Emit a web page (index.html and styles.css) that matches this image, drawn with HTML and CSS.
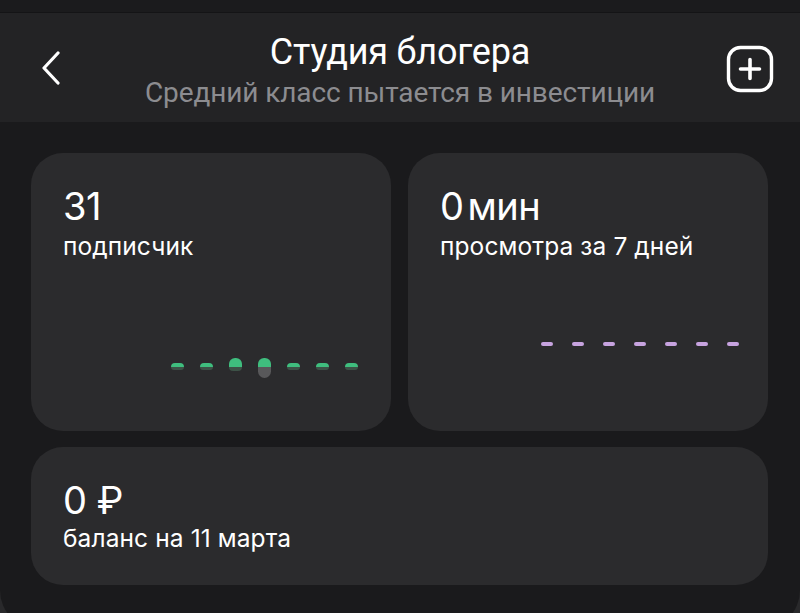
FILE: index.html
```html
<!DOCTYPE html>
<html lang="ru">
<head>
<meta charset="utf-8">
<title>Студия блогера</title>
<link rel="stylesheet" href="styles.css">
</head>
<body>
<div class="screen">
  <div class="top-strip"></div>
  <header class="header">
    <button class="icon-btn back" aria-label="Назад">
      <svg width="22" height="34" viewBox="0 0 22 34"><path d="M18 2 L4 17 L18 32" fill="none" stroke="#fff" stroke-width="3.2" stroke-linecap="round" stroke-linejoin="round"/></svg>
    </button>
    <div class="titles">
      <h1 class="title">Студия блогера</h1>
      <p class="subtitle">Средний класс пытается в инвестиции</p>
    </div>
    <button class="icon-btn add" aria-label="Добавить">
      <svg width="48" height="48" viewBox="0 0 48 48"><rect x="2.5" y="2.5" width="43" height="43" rx="12" fill="none" stroke="#fff" stroke-width="3.4"/><path d="M24 14.5 V33.5 M14.5 24 H33.5" stroke="#fff" stroke-width="3.6" stroke-linecap="round"/></svg>
    </button>
  </header>
  <main class="grid">
    <section class="card">
      <div class="value">31</div>
      <div class="label">подписчик</div>
      <div class="bars">
        <span class="bar"><span class="up"><i class="g" style="height:4px"></i></span><i class="d" style="height:3px"></i></span>
        <span class="bar"><span class="up"><i class="g" style="height:4px"></i></span><i class="d" style="height:3px"></i></span>
        <span class="bar"><span class="up"><i class="g" style="height:9px"></i></span><i class="d" style="height:4px"></i></span>
        <span class="bar"><span class="up"><i class="g" style="height:9px"></i></span><i class="d neg" style="height:11px"></i></span>
        <span class="bar"><span class="up"><i class="g" style="height:4px"></i></span><i class="d" style="height:3px"></i></span>
        <span class="bar"><span class="up"><i class="g" style="height:4px"></i></span><i class="d" style="height:3px"></i></span>
        <span class="bar"><span class="up"><i class="g" style="height:4px"></i></span><i class="d" style="height:3px"></i></span>
      </div>
    </section>
    <section class="card">
      <div class="value">0<span class="unit">мин</span></div>
      <div class="label">просмотра за 7 дней</div>
      <div class="dashes">
        <i></i><i></i><i></i><i></i><i></i><i></i><i></i>
      </div>
    </section>
    <section class="card wide">
      <div class="value">0 ₽</div>
      <div class="label">баланс на 11 марта</div>
    </section>
  </main>
</div>
</body>
</html>
```
FILE: styles.css
```css
html, body {
  margin: 0;
  padding: 0;
  height: 100%;
  overflow: hidden;
  background: #29292b;
}
.screen {
  background: #1a1a1c;
  border-radius: 0 0 40px 40px;
  padding-bottom: 45px;
}
.top-strip {
  height: 12px;
  background: #1b1b1d;
  border-bottom: 1px solid #141416;
}
.header {
  height: 109px;
  background: #232325;
  display: grid;
  grid-template-columns: 100px 1fr 100px;
  align-items: center;
}
.icon-btn {
  background: none;
  border: 0;
  padding: 0;
  display: flex;
  cursor: pointer;
}
.back {
  justify-self: start;
  margin-left: 40px;
  margin-top: 0;
}
.add {
  justify-self: end;
  margin-right: 26px;
  margin-top: 3px;
}
.titles {
  text-align: center;
  font-family: Roboto, "Liberation Sans", sans-serif;
  margin-top: 5px;
}
.title {
  margin: 0;
  font-size: 36px;
  font-weight: 400;
  color: #ffffff;
  line-height: 42px;
  letter-spacing: -0.2px;
}
.subtitle {
  margin: 3px 0 0;
  font-size: 28px;
  line-height: 34px;
  color: #8c8c90;
  letter-spacing: -0.1px;
}
.grid {
  display: grid;
  grid-template-columns: 360px 360px;
  grid-template-rows: 278px 138px;
  gap: 16px 17px;
  padding: 31px 32px 0 31px;
  font-family: Inter, "Noto Sans", sans-serif;
  color: #ffffff;
}
.card {
  background: #2b2b2d;
  border-radius: 32px;
  padding: 30px 32px 0 32px;
  display: flex;
  flex-direction: column;
  position: relative;
}
.wide {
  grid-column: 1 / 3;
  padding-top: 30px;
}
.wide .label {
  margin-top: 0;
}
.value {
  font-size: 38px;
  line-height: 46px;
  font-weight: 400;
  letter-spacing: -0.5px;
}
.unit {
  margin-left: 4px;
}
.label {
  font-size: 24.5px;
  line-height: 30px;
  margin-top: 2px;
  letter-spacing: 0.1px;
}
.bars {
  display: flex;
  gap: 16px;
  align-self: flex-end;
  margin-top: 97px;
  margin-right: 1px;
}
.bar {
  display: flex;
  flex-direction: column;
  width: 13px;
}
.bar .up {
  height: 9px;
  display: flex;
  flex-direction: column;
  justify-content: flex-end;
}
.bar .g {
  display: block;
  background: #3fbe7e;
  border-radius: 6px 6px 0 0;
}
.bar .d {
  display: block;
  background: #3d5247;
  border-radius: 0 0 4px 4px;
}
.bar .d.neg {
  background: #58585a;
  border-radius: 0 0 6.5px 6.5px;
}
.dashes {
  display: flex;
  gap: 19px;
  align-self: flex-end;
  margin-top: 81px;
  margin-right: -3px;
}
.dashes i {
  display: block;
  width: 12px;
  height: 4px;
  border-radius: 2px;
  background: #c7a3df;
}
```
